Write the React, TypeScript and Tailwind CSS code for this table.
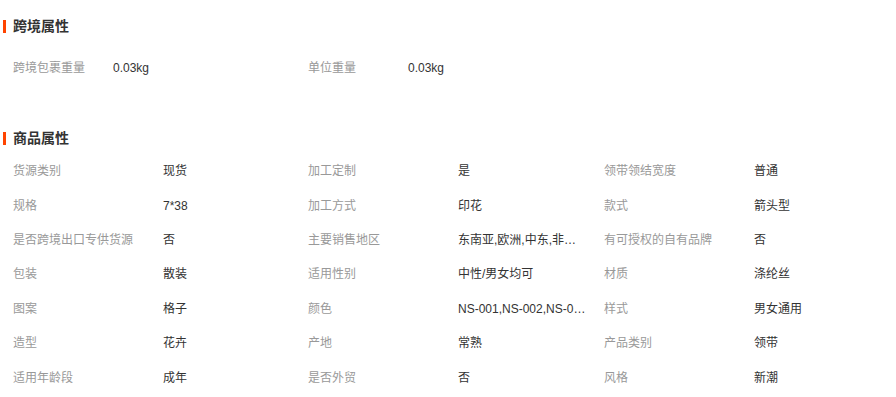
const crossBorder = [
  { label: "跨境包裹重量", value: "0.03kg" },
  { label: "单位重量", value: "0.03kg" },
]

const attrs = [
  ["货源类别", "现货"],
  ["加工定制", "是"],
  ["领带领结宽度", "普通"],
  ["规格", "7*38"],
  ["加工方式", "印花"],
  ["款式", "箭头型"],
  ["是否跨境出口专供货源", "否"],
  ["主要销售地区", "东南亚,欧洲,中东,非洲,北美,南美"],
  ["有可授权的自有品牌", "否"],
  ["包装", "散装"],
  ["适用性别", "中性/男女均可"],
  ["材质", "涤纶丝"],
  ["图案", "格子"],
  ["颜色", "NS-001,NS-002,NS-003,NS-004"],
  ["样式", "男女通用"],
  ["造型", "花卉"],
  ["产地", "常熟"],
  ["产品类别", "领带"],
  ["适用年龄段", "成年"],
  ["是否外贸", "否"],
  ["风格", "新潮"],
]

function SectionTitle({ title }: { title: string }) {
  return (
    <div className="flex items-center h-[20px] pl-[3px]">
      <span className="w-[3px] h-[13px] bg-[#ff4400]" />
      <h2 className="ml-[7px] text-[14px] leading-[20px] font-bold text-[#333]">{title}</h2>
    </div>
  )
}

export default function App() {
  return (
    <div
      className="bg-white w-[896px] h-[397px] overflow-hidden text-[12px]"
      style={{ fontFamily: '"Liberation Sans", "Noto Sans CJK SC", sans-serif' }}
    >
      {/* 跨境属性 */}
      <div className="pt-[16px]">
        <SectionTitle title="跨境属性" />
        <div className="grid grid-cols-[295px_296px] pl-[13px] mt-[15px]">
          {crossBorder.map((item) => (
            <div key={item.label} className="flex items-center h-[34px]">
              <span className="w-[100px] text-[#999]">{item.label}</span>
              <span className="text-[#333]">{item.value}</span>
            </div>
          ))}
        </div>
      </div>

      {/* 商品属性 */}
      <div className="mt-[43px]">
        <SectionTitle title="商品属性" />
        <div className="grid grid-cols-[295px_296px_296px] pl-[13px] mt-[6px]">
          {attrs.map(([label, value]) => (
            <div key={label} className="flex items-center h-[34.4px]">
              <span className="w-[150px] text-[#999] whitespace-nowrap">{label}</span>
              <span className="w-[128px] text-[#333] whitespace-nowrap overflow-hidden text-ellipsis">{value}</span>
            </div>
          ))}
        </div>
      </div>
    </div>
  )
}
